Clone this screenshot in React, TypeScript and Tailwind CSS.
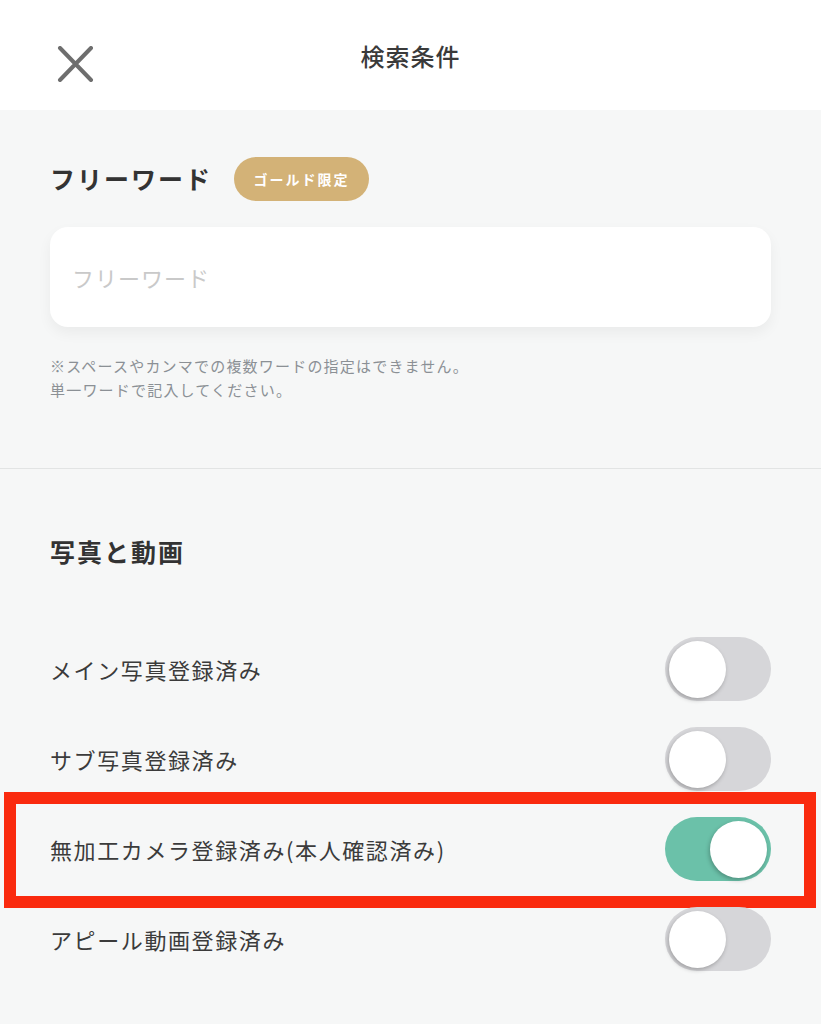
const rows = [
  { label: "メイン写真登録済み", on: false },
  { label: "サブ写真登録済み", on: false },
  { label: "無加工カメラ登録済み(本人確認済み)", on: true, marked: true },
  { label: "アピール動画登録済み", on: false },
];

function Toggle({ on }: { on: boolean }) {
  return (
    <div
      className={`w-[106px] h-[64px] rounded-full flex items-center px-[4px] ${
        on ? "bg-[#6bc1a9] justify-end" : "bg-[#d6d6d9] justify-start"
      }`}
    >
      <div className="w-[57px] h-[57px] rounded-full bg-white shadow-[-1px_2px_4px_rgba(0,0,0,0.25)]" />
    </div>
  );
}

export default function App() {
  return (
    <div
      className="w-[821px] h-[1024px] bg-[#f6f7f7] text-[#333] overflow-hidden"
      style={{ fontFamily: '"Noto Sans CJK JP", "Noto Sans", sans-serif' }}
    >
      <header className="h-[110px] bg-white flex items-center relative">
        <svg className="absolute left-[57px] top-[46px]" width="37" height="36" viewBox="0 0 37 36">
          <path d="M3 2 L34 34 M34 2 L3 34" stroke="#6e6e6e" strokeWidth="4" strokeLinecap="round" />
        </svg>
        <h1 className="flex-1 text-center text-[24px] tracking-[1px] font-medium text-[#3a3a3a] pt-[2px]">検索条件</h1>
      </header>

      <section className="px-[50px] pt-[47px] pb-[66px] border-b border-[#e2e4e4]">
        <div className="h-[44px] flex items-center gap-[22px]">
          <h2 className="text-[25px] tracking-[2px] font-bold text-[#333]">フリーワード</h2>
          <span className="h-[44px] w-[135px] rounded-full bg-[#d3b277] text-white text-[14px] tracking-[2px] font-bold flex items-center justify-center">
            ゴールド限定
          </span>
        </div>
        <div className="mt-[26px] h-[100px] rounded-[18px] bg-white shadow-[0_6px_14px_rgba(0,0,0,0.05)] flex items-center px-[22px]">
          <span className="text-[22px] tracking-[1px] text-[#c9c9c9]">フリーワード</span>
        </div>
        <p className="mt-[27px] text-[15px] tracking-[1.2px] leading-[24px] text-[#8b9095]">
          ※スペースやカンマでの複数ワードの指定はできません。
          <br />
          単一ワードで記入してください。
        </p>
      </section>

      <section className="px-[50px] pt-[66px]">
        <h2 className="text-[25px] tracking-[2px] leading-[32px] font-bold text-[#333]">写真と動画</h2>
        <div className="mt-[57px]">
          {rows.map((r) => (
            <div key={r.label} className="relative h-[90px] flex items-center justify-between">
              <span className="text-[22px] tracking-[1.6px] text-[#3b3b3b]">{r.label}</span>
              <Toggle on={r.on} />
              {r.marked && (
                <div className="absolute -left-[46px] -right-[45px] -top-[12px] -bottom-[14px] border-[12px] border-[#fa2a0e]" />
              )}
            </div>
          ))}
        </div>
      </section>
    </div>
  );
}
